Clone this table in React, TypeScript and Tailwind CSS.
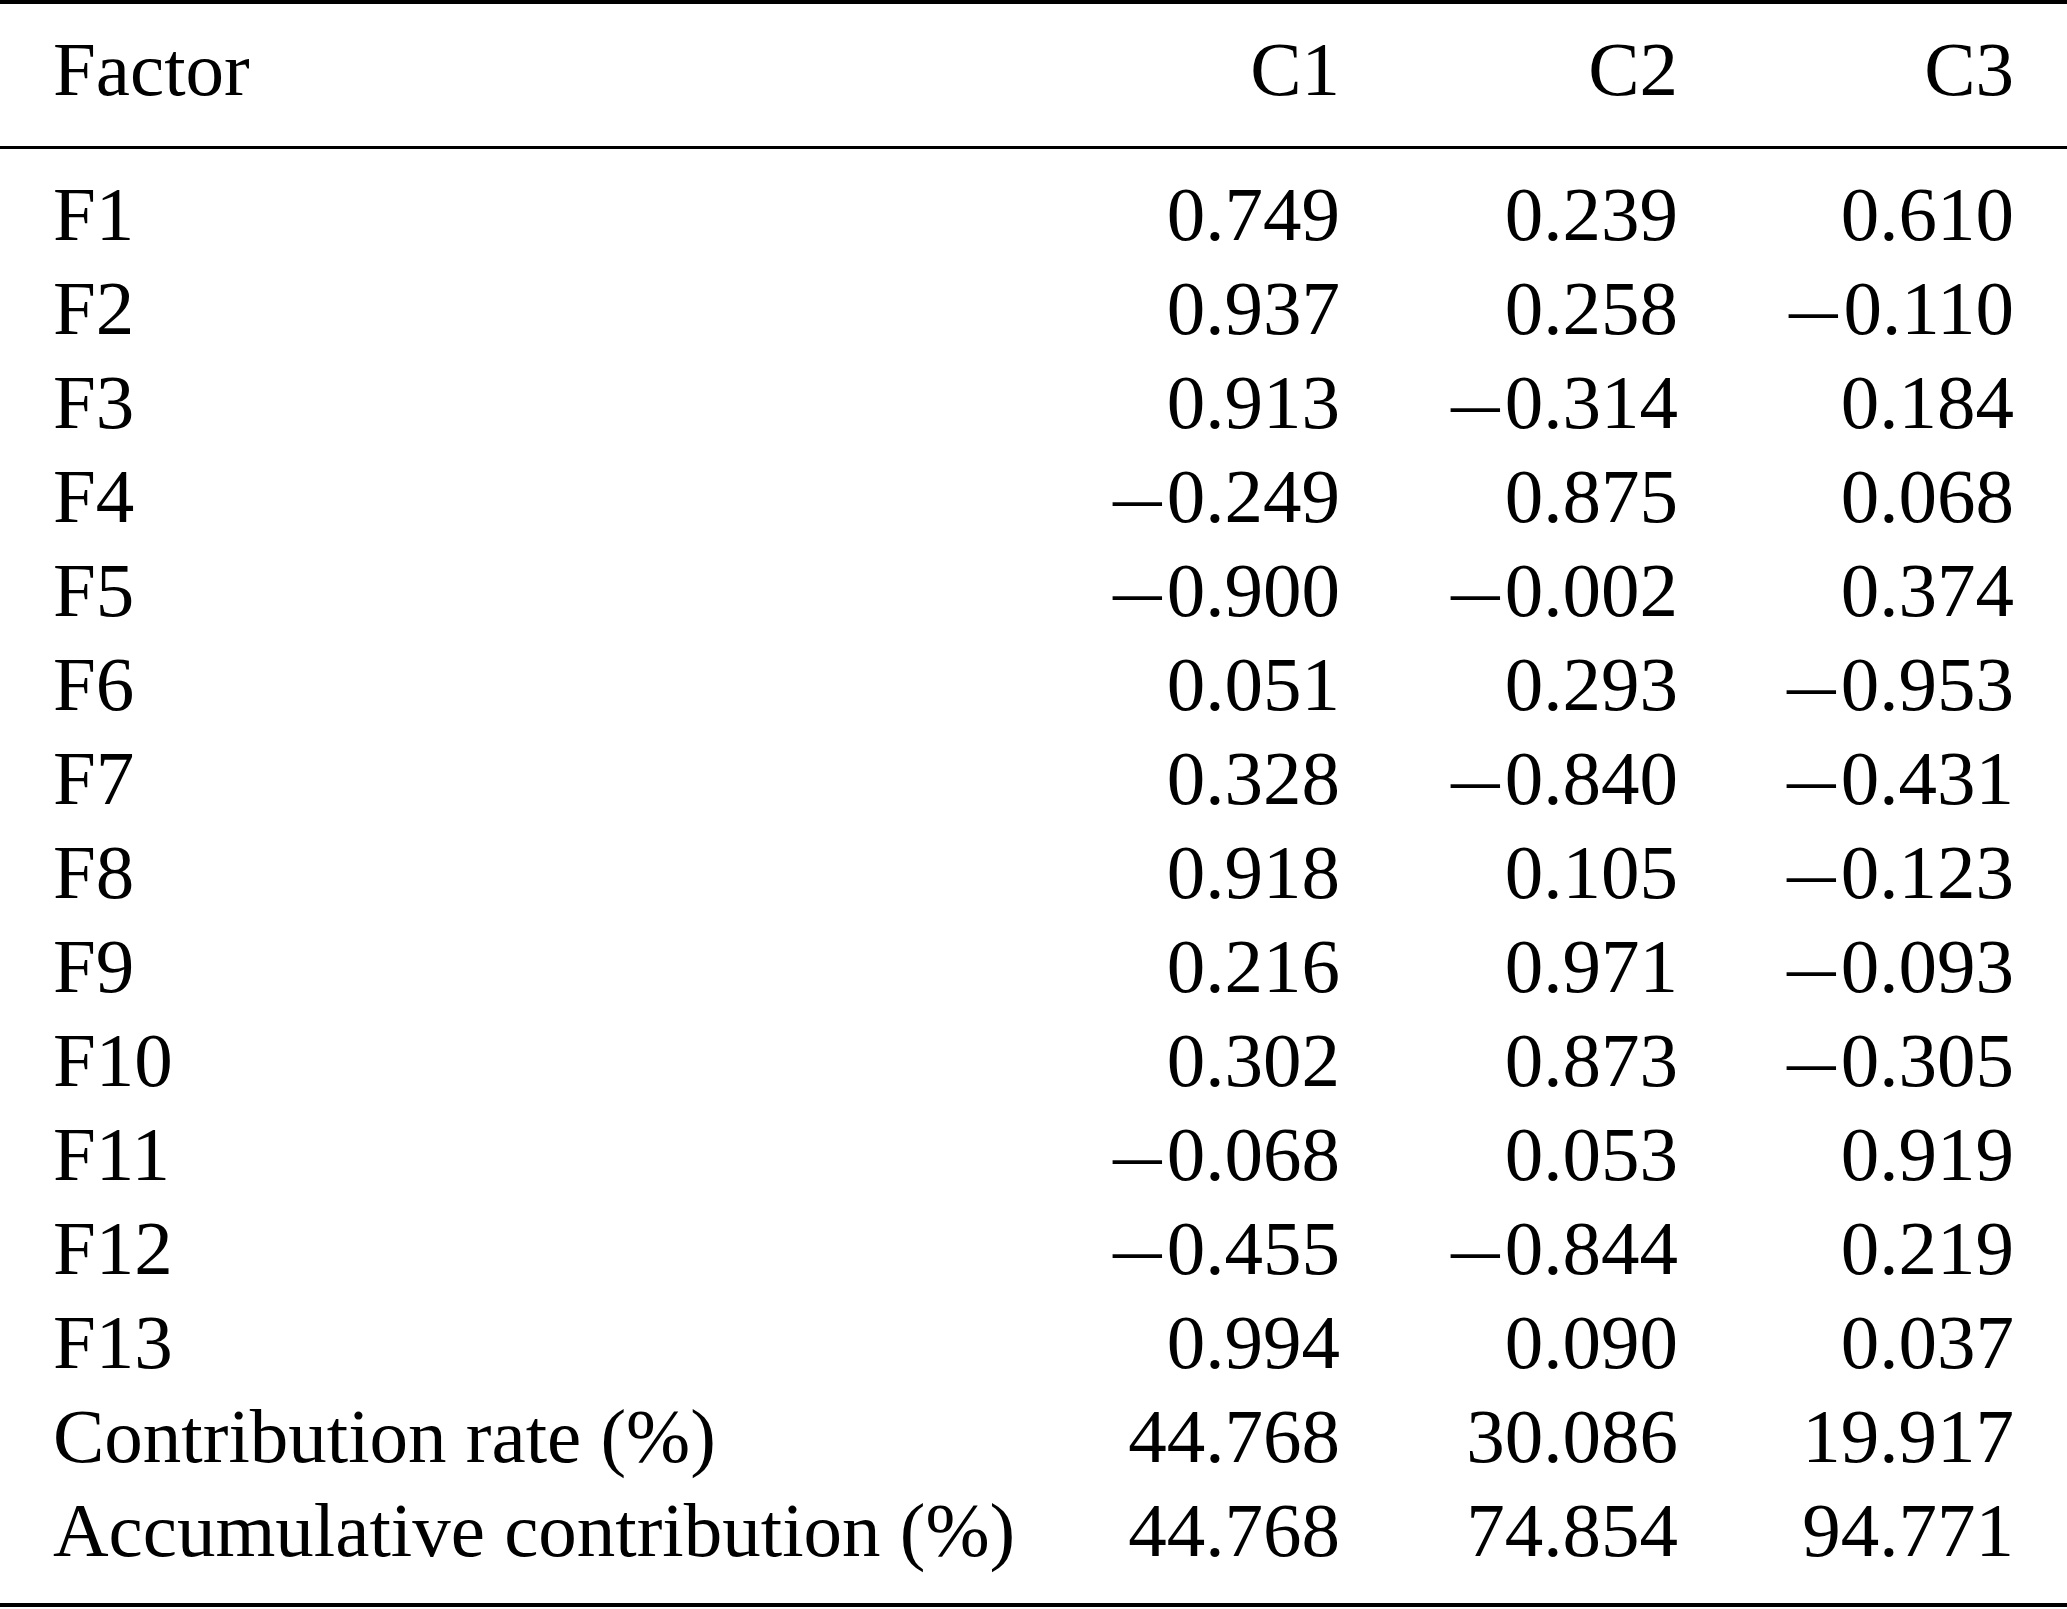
const rows: [string, string, string, string][] = [
  ["F1", "0.749", "0.239", "0.610"],
  ["F2", "0.937", "0.258", "−0.110"],
  ["F3", "0.913", "−0.314", "0.184"],
  ["F4", "−0.249", "0.875", "0.068"],
  ["F5", "−0.900", "−0.002", "0.374"],
  ["F6", "0.051", "0.293", "−0.953"],
  ["F7", "0.328", "−0.840", "−0.431"],
  ["F8", "0.918", "0.105", "−0.123"],
  ["F9", "0.216", "0.971", "−0.093"],
  ["F10", "0.302", "0.873", "−0.305"],
  ["F11", "−0.068", "0.053", "0.919"],
  ["F12", "−0.455", "−0.844", "0.219"],
  ["F13", "0.994", "0.090", "0.037"],
  ["Contribution rate (%)", "44.768", "30.086", "19.917"],
  ["Accumulative contribution (%)", "44.768", "74.854", "94.771"],
];

// the source's minus is a long thin bar, wider than the serif glyph
function Num({ v }: { v: string }) {
  if (v.startsWith("−")) {
    return (
      <>
        <span className="inline-block w-[60px] text-center">
          <span className="inline-block scale-x-[1.25]">–</span>
        </span>
        {v.slice(1)}
      </>
    );
  }
  return <>{v}</>;
}

function Row({ cells }: { cells: string[] }) {
  return (
    <div className="grid grid-cols-[1fr_300px_338px_336px] h-[94px] leading-[94px]">
      <div className="text-left whitespace-nowrap">{cells[0]}</div>
      <div className="text-right whitespace-nowrap">
        <Num v={cells[1]} />
      </div>
      <div className="text-right whitespace-nowrap">
        <Num v={cells[2]} />
      </div>
      <div className="text-right whitespace-nowrap">
        <Num v={cells[3]} />
      </div>
    </div>
  );
}

export default function App() {
  return (
    <div className="w-[2067px] h-[1609px] bg-white text-black font-['Liberation_Serif','Times_New_Roman',serif] text-[77px]">
      {/* top rule */}
      <div className="h-[4px] bg-black" />

      {/* header */}
      <div className="px-[53px] pt-[18px] pb-[30px]">
        <Row cells={["Factor", "C1", "C2", "C3"]} />
      </div>
      <div className="h-[3px] bg-black" />

      {/* body */}
      <div className="px-[53px] pt-[18px] pb-[26px]">
        {rows.map((r) => (
          <Row key={r[0]} cells={r} />
        ))}
      </div>

      {/* bottom rule */}
      <div className="h-[4px] bg-black" />
    </div>
  );
}
